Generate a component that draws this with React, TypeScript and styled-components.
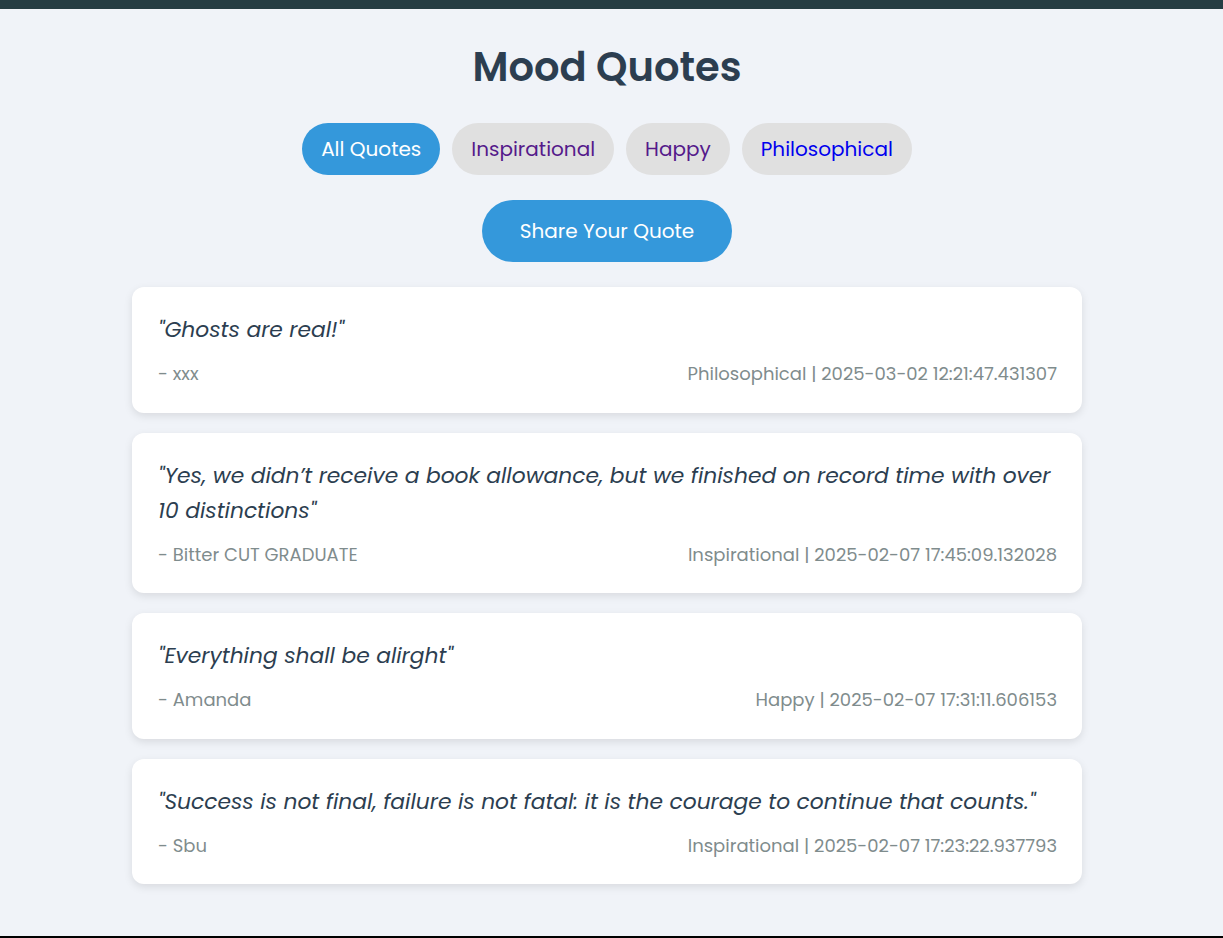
import React from "react";
import styled, { createGlobalStyle } from "styled-components";

const Global = createGlobalStyle`
  html, body { margin: 0; padding: 0; }
  body {
    background: #f0f3f8;
    font-family: "Poppins", "Open Sans", "Noto Sans", sans-serif;
    color: #2c3e50;
  }
`;

const Page = styled.div`
  min-height: 100vh;
  display: flex;
  flex-direction: column;
  box-sizing: border-box;
  padding-right: 9px;
  border-top: 9px solid #263d43;
  border-bottom: 2px solid #000;
`;

const Main = styled.main`
  flex: 1;
  width: 950px;
  margin: 0 auto;
  display: flex;
  flex-direction: column;
  align-items: center;
`;

const Title = styled.h1`
  margin: 38px 0 0;
  font-size: 40px;
  line-height: 40px;
  font-weight: 600;
  color: #2c3e50;
`;

const Filters = styled.nav`
  display: flex;
  gap: 12px;
  margin-top: 36px;
`;

const Pill = styled.a<{ $active?: boolean; $visited?: boolean }>`
  display: flex;
  align-items: center;
  justify-content: center;
  height: 52px;
  padding: 0 19px;
  border-radius: 26px;
  font-size: 20px;
  text-decoration: none;
  background: ${(p) => (p.$active ? "#3498db" : "#e0e0e0")};
  color: ${(p) => (p.$active ? "#ffffff" : p.$visited ? "#551a8b" : "#0000ee")};
  cursor: pointer;
`;

const ShareButton = styled.button`
  margin-top: 25px;
  height: 62px;
  padding: 0 38px;
  border: none;
  border-radius: 31px;
  background: #3498db;
  color: #fff;
  font-family: inherit;
  font-size: 20px;
  cursor: pointer;
`;

const List = styled.section`
  align-self: stretch;
  display: flex;
  flex-direction: column;
  gap: 20px;
  margin-top: 25px;
  padding-bottom: 40px;
`;

const Card = styled.article`
  background: #fff;
  border-radius: 12px;
  padding: 25px 25px 25px 26px;
  box-shadow: 0 3px 8px rgba(0, 0, 0, 0.1);
`;

const QuoteText = styled.p`
  margin: 0;
  font-size: 21.8px;
  line-height: 35px;
  font-style: italic;
  color: #2c3e50;
`;

const Meta = styled.div`
  display: flex;
  justify-content: space-between;
  margin-top: 13px;
  font-size: 18px;
  line-height: 27.6px;
  color: #7f8c8d;
`;

const quotes = [
  { text: "Ghosts are real!", author: "xxx", mood: "Philosophical", date: "2025-03-02 12:21:47.431307" },
  {
    text: "Yes, we didn\u2019t receive a book allowance, but we finished on record time with over 10 distinctions",
    author: "Bitter CUT GRADUATE",
    mood: "Inspirational",
    date: "2025-02-07 17:45:09.132028",
  },
  { text: "Everything shall be alirght", author: "Amanda", mood: "Happy", date: "2025-02-07 17:31:11.606153" },
  {
    text: "Success is not final, failure is not fatal: it is the courage to continue that counts.",
    author: "Sbu",
    mood: "Inspirational",
    date: "2025-02-07 17:23:22.937793",
  },
];

export default function App() {
  return (
    <Page>
      <Global />
      <Main>
        <Title>Mood Quotes</Title>
        <Filters>
          <Pill $active>All Quotes</Pill>
          <Pill $visited>Inspirational</Pill>
          <Pill $visited>Happy</Pill>
          <Pill>Philosophical</Pill>
        </Filters>
        <ShareButton>Share Your Quote</ShareButton>
        <List>
          {quotes.map((q, i) => (
            <Card key={i}>
              <QuoteText>"{q.text}"</QuoteText>
              <Meta>
                <span>- {q.author}</span>
                <span>
                  {q.mood} | {q.date}
                </span>
              </Meta>
            </Card>
          ))}
        </List>
      </Main>
    </Page>
  );
}
